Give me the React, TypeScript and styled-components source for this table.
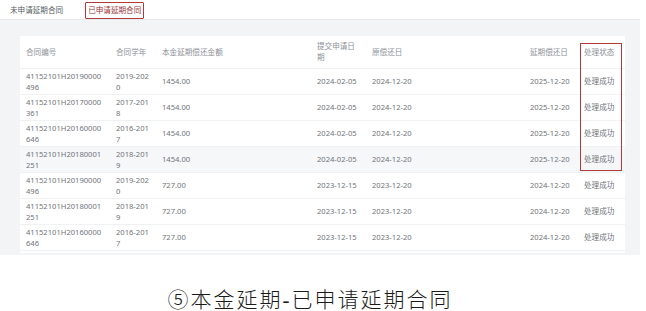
import React from 'react';
import styled, { createGlobalStyle } from 'styled-components';

const GlobalStyle = createGlobalStyle`
  html, body {
    margin: 0;
    padding: 0;
    background: #ffffff;
  }
  body {
    font-family: "Noto Sans", "Noto Sans CJK SC", sans-serif;
    width: 646px;
    height: 311px;
    overflow: hidden;
  }
`;

const Page = styled.div`
  width: 646px;
  display: flex;
  flex-direction: column;
`;

const TabBar = styled.div`
  width: 640px;
  height: 20px;
  display: flex;
  align-items: center;
  gap: 22px;
  padding-left: 10px;
  box-sizing: border-box;
  border-bottom: 1px solid #e6e8ec;
`;

const Tab = styled.div<{ $active?: boolean }>`
  font-size: 7.6px;
  line-height: 13px;
  color: ${(p) => (p.$active ? '#9b3434' : '#555a60')};
  padding: ${(p) => (p.$active ? '1px 2px' : '0')};
  border: ${(p) => (p.$active ? '1.5px solid #b23a3a' : 'none')};
  border-radius: 1px;
  margin-top: 2px;
`;

const Panel = styled.div`
  width: 640px;
  background: #f3f4f6;
  padding: 16px 15px 2px 20px;
  box-sizing: border-box;
`;

const Card = styled.div`
  position: relative;
  width: 605px;
  background: #ffffff;
  padding-bottom: 2px;
`;

const Table = styled.table`
  width: 605px;
  table-layout: fixed;
  border-collapse: collapse;
  font-size: 7.6px;
  color: #70747a;
`;

const HeadCell = styled.th`
  height: 32px;
  padding: 0 6px;
  text-align: left;
  font-weight: 400;
  color: #8d9198;
  line-height: 11px;
  vertical-align: middle;
  border-bottom: 1px solid #f0f1f3;
`;

const Row = styled.tr<{ $hover?: boolean }>`
  background: ${(p) => (p.$hover ? '#f6f7f9' : '#ffffff')};
`;

const Cell = styled.td`
  height: 25px;
  padding: 0 6px;
  line-height: 11px;
  vertical-align: middle;
  word-break: break-all;
  border-bottom: 1px solid #f0f1f3;
`;

const Mark = styled.div`
  position: absolute;
  left: 560px;
  top: 7px;
  width: 42px;
  height: 128px;
  border: 1.5px solid #b23a3a;
  box-sizing: border-box;
  pointer-events: none;
`;

const Caption = styled.div`
  margin-top: 28px;
  padding-right: 26px;
  text-align: center;
  font-family: "Liberation Serif", "Noto Sans CJK SC", serif;
  font-size: 21px;
  font-weight: 300;
  letter-spacing: 2px;
  color: #1a1a1a;
`;

const widths = [90, 46, 155, 55, 158, 54, 47];
const headers = ['合同编号', '合同学年', '本金延期偿还金额', '提交申请日期', '原偿还日', '延期偿还日', '处理状态'];

const rows = [
  ['41152101H20190000496', '2019-2020', '1454.00', '2024-02-05', '2024-12-20', '2025-12-20'],
  ['41152101H20170000361', '2017-2018', '1454.00', '2024-02-05', '2024-12-20', '2025-12-20'],
  ['41152101H20160000646', '2016-2017', '1454.00', '2024-02-05', '2024-12-20', '2025-12-20'],
  ['41152101H20180001251', '2018-2019', '1454.00', '2024-02-05', '2024-12-20', '2025-12-20'],
  ['41152101H20190000496', '2019-2020', '727.00', '2023-12-15', '2023-12-20', '2024-12-20'],
  ['41152101H20180001251', '2018-2019', '727.00', '2023-12-15', '2023-12-20', '2024-12-20'],
  ['41152101H20160000646', '2016-2017', '727.00', '2023-12-15', '2023-12-20', '2024-12-20'],
];

export default function App() {
  return (
    <Page>
      <GlobalStyle />
      <TabBar>
        <Tab>未申请延期合同</Tab>
        <Tab $active>已申请延期合同</Tab>
      </TabBar>
      <Panel>
        <Card>
          <Table>
            <colgroup>
              {widths.map((w, i) => (
                <col key={i} style={{ width: w }} />
              ))}
            </colgroup>
            <thead>
              <tr>
                {headers.map((h) => (
                  <HeadCell key={h}>{h}</HeadCell>
                ))}
              </tr>
            </thead>
            <tbody>
              {rows.map((r, i) => (
                <Row key={i} $hover={i === 3}>
                  {r.map((c, j) => (
                    <Cell key={j}>{c}</Cell>
                  ))}
                  <Cell>处理成功</Cell>
                </Row>
              ))}
            </tbody>
          </Table>
          <Mark />
        </Card>
      </Panel>
      <Caption>⑤本金延期-已申请延期合同</Caption>
    </Page>
  );
}
